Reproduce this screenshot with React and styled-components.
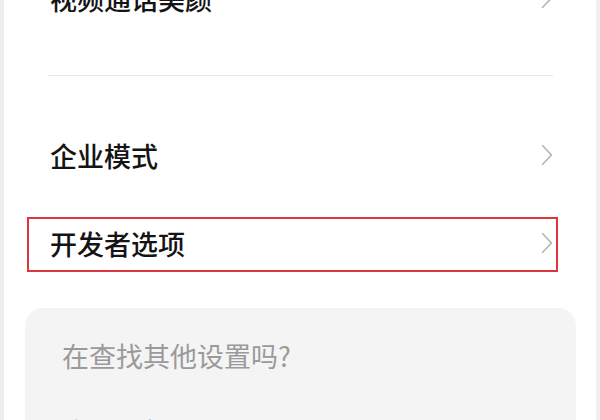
import React from "react";
import styled, { createGlobalStyle } from "styled-components";

const Global = createGlobalStyle`
  html, body { margin: 0; padding: 0; background: #ffffff; }
  body {
    font-family: "Noto Sans CJK SC", "Noto Sans", sans-serif;
    width: 600px; height: 420px; overflow: hidden;
  }
`;

const Screen = styled.div`
  width: 600px;
  height: 420px;
  box-sizing: border-box;
  border-left: 4px solid #eeeeee;
  border-right: 4px solid #f0f0f0;
  background: #ffffff;
  overflow: hidden;
`;

const Scroller = styled.div`
  margin-top: -46px;
  display: flex;
  flex-direction: column;
`;

const Row = styled.div`
  position: relative;
  height: 88px;
  display: flex;
  align-items: center;
  justify-content: space-between;
  padding: 0 43px 0 46px;
  ${(p) =>
    p.$highlight &&
    `
    &::after {
      content: "";
      position: absolute;
      left: 23px;
      right: 38px;
      top: 18px;
      bottom: 15px;
      border: 2px solid #d9363d;
      pointer-events: none;
    }
  `}
`;

const Label = styled.span`
  font-size: 27px;
  font-weight: 500;
  color: #141414;
`;

const Divider = styled.div`
  height: 1px;
  background: #e9e9e9;
  margin: ${(p) => p.$margin};
`;

const Card = styled.div`
  margin: 21px 20px 0 21px;
  background: #f4f4f4;
  border-radius: 18px;
  padding: 30px 36px 0 37px;
  height: 200px;
  display: flex;
  flex-direction: column;
  gap: 40px;
`;

const Hint = styled.div`
  font-size: 27px;
  font-weight: 400;
  color: #9a9a9a;
  line-height: 36px;
`;

const Link = styled.div`
  font-size: 27px;
  font-weight: 400;
  color: #5aa6e8;
  line-height: 36px;
`;

const Chevron = () => (
  <svg width="12" height="22" viewBox="0 0 12 22" fill="none">
    <path
      d="M1.5 1.5 L10.5 11 L1.5 20.5"
      stroke="#b4b4b4"
      strokeWidth="1.6"
      strokeLinecap="round"
      strokeLinejoin="round"
    />
  </svg>
);

export default function App() {
  return (
    <>
      <Global />
      <Screen>
        <Scroller>
          <Row>
            <Label>视频通话美颜</Label>
            <Chevron />
          </Row>
          <Divider $margin="33px 43px 35px 44px" />
          <Row>
            <Label>企业模式</Label>
            <Chevron />
          </Row>
          <Row $highlight>
            <Label>开发者选项</Label>
            <Chevron />
          </Row>
          <Card>
            <Hint>在查找其他设置吗?</Hint>
            <Link>应用与权限</Link>
          </Card>
        </Scroller>
      </Screen>
    </>
  );
}
